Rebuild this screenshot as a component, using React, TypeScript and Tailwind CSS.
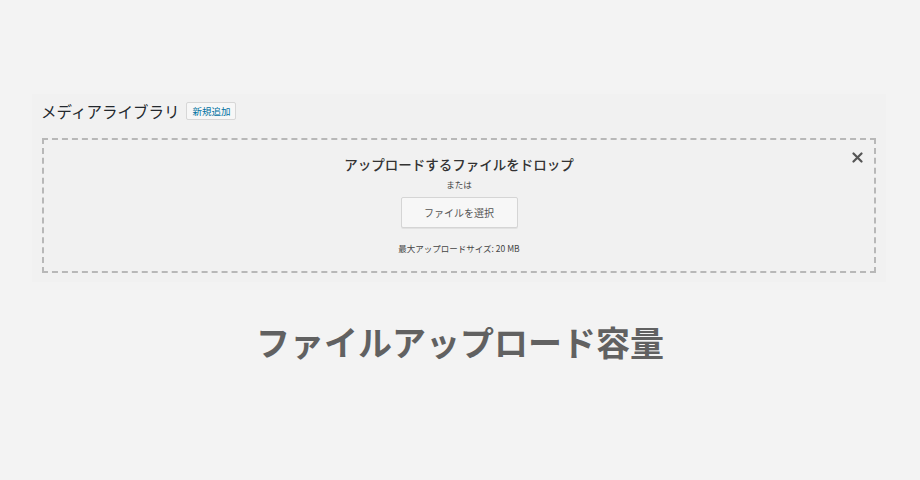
import React from "react";

export default function App() {
  return (
    <div
      className="w-[920px] h-[480px] bg-[#f3f3f3] overflow-hidden"
      style={{ fontFamily: '"Noto Sans CJK JP", "Noto Sans", sans-serif' }}
    >
      <div className="pt-[94px] pl-[32px]">
        <div className="w-[854px] h-[188px] bg-[#f1f1f1] px-[10px] pt-[6px]">
          <div className="flex items-center h-[22px] -ml-[1px]">
            <h1 className="text-[15.5px] leading-[22px] text-[#23282d] font-normal">
              メディアライブラリ
            </h1>
            <button className="ml-[7px] h-[18px] px-[5px] border border-[#d7d7d7] bg-[#f7f7f7] rounded-[2px] text-[9.5px] leading-[16px] text-[#0071a1]">
              新規追加
            </button>
          </div>
          <div className="relative mt-[16px] h-[135px] border-[2px] border-dashed border-[#b8b8b8] flex flex-col items-center">
            <svg
              className="absolute right-[11px] top-[12px]"
              width="11"
              height="11"
              viewBox="0 0 11 11"
            >
              <path d="M1.5 1.5L9.5 9.5M9.5 1.5L1.5 9.5" stroke="#555" strokeWidth="2.2" strokeLinecap="round" />
            </svg>
            <p className="mt-[14px] text-[13.5px] leading-[20px] text-[#333] font-medium">
              アップロードするファイルをドロップ
            </p>
            <p className="mt-[4px] text-[8.5px] leading-[12px] text-[#444]">または</p>
            <button className="mt-[7px] w-[117px] h-[31px] bg-[#f7f7f7] border border-[#d5d5d5] rounded-[2px] shadow-[0_1px_0_#e2e2e2] text-[10px] text-[#555]">
              ファイルを選択
            </button>
            <p className="mt-[14px] text-[8.5px] leading-[12px] text-[#444]">
              最大アップロードサイズ: 20 MB
            </p>
          </div>
        </div>
      </div>
      <div className="mt-[38px] text-center text-[34px] leading-[44px] font-bold text-[#616161]">
        ファイルアップロード容量
      </div>
    </div>
  );
}
